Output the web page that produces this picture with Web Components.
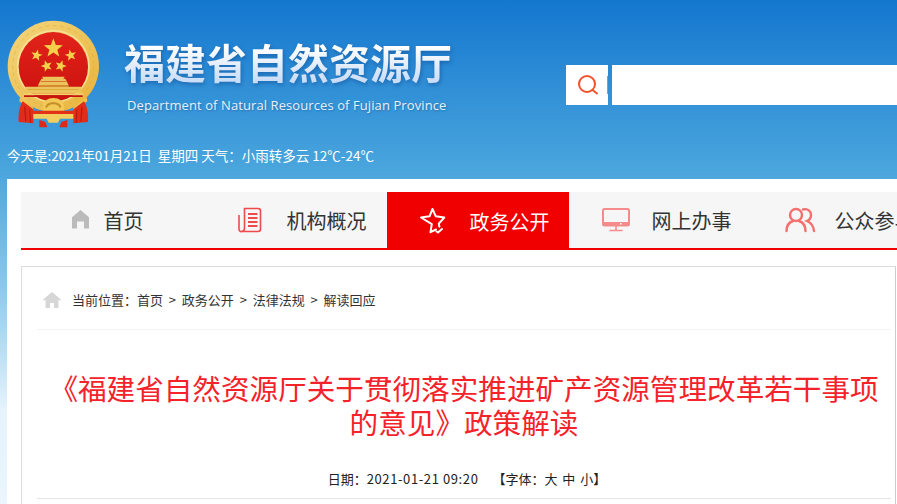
<!DOCTYPE html>
<html lang="zh-CN">
<head>
<meta charset="utf-8">
<title>福建省自然资源厅</title>
<style>
  html, body { margin: 0; height: 504px; overflow: hidden; }
  body {
    background: linear-gradient(180deg, #1477cf 0, #4ba6dd 172px, #8ccaec 290px, #e6f3fc 410px, #eaf5fd 504px);
    font-family: "Noto Sans CJK SC", sans-serif;
  }
</style>
</head>
<body>
<site-header>
  <site-logo slot="logo"></site-logo>
  <span slot="name">福建省自然资源厅</span>
  <span slot="english">Department of Natural Resources of Fujian Province</span>
  <site-search slot="search"></site-search>
  <span slot="weather">今天是:2021年01月21日&nbsp; 星期四 天气&#xFF1A;小雨转多云 12℃-24℃</span>
</site-header>
<page-panel>
  <main-nav>
    <nav-item width="183" text="首页"><svg slot="icon" width="50" height="22" viewBox="0 0 50 22"><path fill="#bbb" d="M18 19.500V8.200L26.500 1 35 8.200v11.300h-5v-7h-7v7z"/></svg></nav-item>
    <nav-item width="183" text="机构概况"><svg slot="icon" width="50" height="26" viewBox="0 0 50 26" fill="none" stroke="#ee4b4b"><path stroke-width="1.600" d="M2 8v14c0 2 1.500 3 3 2.500M8 1.500h13c1.500 0 2.500 1 2.500 2.500v18c0 1.500-1 2.500-2.500 2.500H5c1.500-.5 2.500-1.500 2.500-3V1.500z"/><path stroke-width="2" d="M11 7h9.500M11 11h9.500M11 15h9.500M11 19h9.500"/></svg></nav-item>
    <nav-item width="182" text="政务公开" active><svg slot="icon" width="50" height="26" viewBox="0 0 50 26" fill="none" stroke="#fff" stroke-width="2" stroke-linejoin="round" stroke-linecap="round"><path d="M16 21.500l-5.500 2.700 1.300-8L1 9.500l8.500-1.200L12.500 1l3.300 7.300 8.500 1.200-5.500 6.200.6 3"/><path d="M16.500 23.500l1.500 1 4-3.500"/></svg></nav-item>
    <nav-item width="183" text="网上办事"><svg slot="icon" width="50" height="24" viewBox="0 0 50 24" fill="none"><rect x="1" y="1" width="26" height="16.500" rx="1.500" stroke="#f58b8b" stroke-width="2"/><path fill="#f58b8b" d="M1 14h26v4H1z"/><path stroke="#f58b8b" stroke-width="1.600" d="M14 18v4M7.500 22.500h13"/><path fill="#fff" d="M18 15h1.500v1.500H18z"/></svg></nav-item>
    <nav-item width="183" text="公众参与"><svg slot="icon" width="50" height="26" viewBox="0 0 50 26" fill="none" stroke="#f56e6e" stroke-width="2.400" stroke-linecap="round"><circle cx="11" cy="8" r="6"/><path d="M1.500 24c0-6 3.500-9 6.500-10M20.500 24c0-6-3.500-9-6.500-10"/><path d="M18 2.500c5-1.500 8 2 8 5.500 0 2.500-1.500 5-4 6 3.500 1.500 6.500 4.500 7 10"/></svg></nav-item>
  </main-nav>
  <article-box>
    <bread-crumb></bread-crumb>
    <article-head></article-head>
  </article-box>
</page-panel>
<script>
  class SiteLogo extends HTMLElement {
    constructor() {
      super();
      this.attachShadow({ mode: "open" });
      const star = (x, y, r, rot) => {
        const pts = [];
        for (let i = 0; i < 10; i++) {
          const a = (rot + i * 36 - 90) * Math.PI / 180;
          const d = i % 2 ? r * 0.42 : r;
          pts.push((x + d * Math.cos(a)).toFixed(1) + "," + (y + d * Math.sin(a)).toFixed(1));
        }
        return `<polygon points="${pts.join(" ")}"/>`;
      };
      this.shadowRoot.innerHTML = `
        <style>:host { display: block; width: 110px; height: 110px; } svg { display: block; }</style>
        <svg width="110" height="110" viewBox="0 0 330 330">
          <defs>
            <linearGradient id="g" x1="0" y1="0" x2="1" y2="1"><stop offset="0" stop-color="#f3d67e"/><stop offset="1" stop-color="#e9b238"/></linearGradient>
            <linearGradient id="r" x1="0" y1="0" x2="0" y2="1"><stop offset="0" stop-color="#e1231a"/><stop offset="1" stop-color="#cb110e"/></linearGradient>
          </defs>
          <circle cx="160" cy="139" r="137" fill="url(#g)"/>
          <circle cx="160" cy="139" r="122" fill="none" stroke="#dda72f" stroke-width="2" stroke-dasharray="12 10" opacity=".7"/>
          <circle cx="160" cy="139" r="107" fill="none" stroke="#f6e095" stroke-width="5"/>
          <circle cx="160" cy="140" r="104" fill="url(#r)"/>
          <g fill="#f6d04a">${star(160, 85, 30, 0)}${star(110, 106, 18, 12)}${star(212, 106, 18, -12)}${star(140, 138, 18, -18)}${star(182, 138, 18, 18)}</g>
          <path fill="#ecc25a" d="M126 170h68l-4 6h6l10 20H114l10-20h6zM76 200h168v20H76z"/>
          <path fill="#d8a338" d="M114 196h92v4h-92zM84 208h152v2H84z"/>
          <path fill="#d04a22" d="M122 183h76v2h-76z"/>
          <path fill="#f3d06a" d="M70 220h180v6H70z"/>
          <path fill="#c4160f" d="M72 226h176v5H72z"/>
          <path fill="#f0c24e" d="M60 232l40 30v10l-42-28zM260 232l-40 30v10l42-28z"/>
          <path fill="#e02c18" d="M68 244l32 24v42l-44-4c-2-22 2-46 12-62zM252 244l-32 24v42l44-4c2-22-2-46-12-62z"/>
          <path fill="#b9180f" d="M72 262l4 42h3l-3-44zM88 268l2 40h3l-2-38zM248 262l-4 42h-3l3-44zM232 268l-2 40h-3l2-38z"/>
          <path fill="#f2c956" d="M128 258a32 24 0 0 1 64 0v18h-64z"/>
          <path fill="#c98f2a" d="M136 262a24 16 0 0 1 48 0l-5 2a19 11 0 0 0-38 0z"/>
          <path fill="#e33118" d="M92 272h136v10H92z"/>
          <path fill="#f3cd5d" d="M100 282h120v14h-40l-6 12h-28l-6-12h-40z"/>
          <path fill="#dc2a16" d="M118 300l18 6 6 16h-24zM202 300l-18 6-6 16h24z"/>
        </svg>`;
    }
  }
  customElements.define("site-logo", SiteLogo);

  class SiteSearch extends HTMLElement {
    constructor() {
      super();
      this.attachShadow({ mode: "open" });
      this.shadowRoot.innerHTML = `
        <style>
          :host { display: flex; height: 40px; gap: 4px; }
          .btn { width: 42px; background: #fff; display: flex; align-items: center; position: relative; }
          .btn svg { margin-left: 11px; }
          .btn i { position: absolute; right: 0; top: 11px; width: 1px; height: 18px; background: #9a9a9a; }
          .field { flex: 1; background: #fff; }
        </style>
        <div class="btn">
          <svg width="22" height="22" viewBox="0 0 22 22" fill="none" stroke="#f4512c" stroke-width="2"><circle cx="10" cy="10" r="8"/><path stroke-linecap="round" d="M15.500 16l4.500 3.500"/></svg>
          <i></i>
        </div>
        <div class="field"></div>`;
    }
  }
  customElements.define("site-search", SiteSearch);

  class SiteHeader extends HTMLElement {
    constructor() {
      super();
      this.attachShadow({ mode: "open" });
      this.shadowRoot.innerHTML = `
        <style>
          :host { display: block; height: 179px; color: #fff; padding-top: 20px; box-sizing: border-box; }
          .top { display: flex; height: 110px; }
          .brand { margin-left: 14px; width: 442px; flex: none; padding-top: 18px; }
          .name {
            font: 700 41px/46px "Noto Sans CJK SC", sans-serif;
            white-space: nowrap;
            background: linear-gradient(180deg, #fff 20%, #c9dcf6 95%);
            -webkit-background-clip: text;
            background-clip: text;
            color: transparent;
            filter: drop-shadow(1px 2px 2px rgba(8,60,130,.45));
          }
          .english {
            margin: 12px 0 0 3px;
            font: 13px/18px "Open Sans", sans-serif;
            color: #e6f0fa;
            white-space: nowrap;
            letter-spacing: .09px;
            text-shadow: 1px 1px 2px rgba(10,60,120,.4);
          }
          .search { flex: 1; padding-top: 45px; }
          .weather { margin: 13px 0 0 7px; font-size: 13.500px; line-height: 24px; white-space: nowrap; }
        </style>
        <div class="top">
          <slot name="logo"></slot>
          <div class="brand">
            <div class="name"><slot name="name"></slot></div>
            <div class="english"><slot name="english"></slot></div>
          </div>
          <div class="search"><slot name="search"></slot></div>
        </div>
        <div class="weather"><slot name="weather"></slot></div>`;
    }
  }
  customElements.define("site-header", SiteHeader);

  class PagePanel extends HTMLElement {
    constructor() {
      super();
      this.attachShadow({ mode: "open" });
      this.shadowRoot.innerHTML = `
        <style>
          :host { display: block; margin-left: 7px; height: 325px; background: #fff; padding: 13px 0 0 14px; box-sizing: border-box; overflow: hidden; }
        </style>
        <slot></slot>`;
    }
  }
  customElements.define("page-panel", PagePanel);

  class MainNav extends HTMLElement {
    constructor() {
      super();
      this.attachShadow({ mode: "open" });
      this.shadowRoot.innerHTML = `
        <style>
          :host { display: flex; height: 58px; box-sizing: border-box; background: #f6f6f6; border-bottom: 2px solid #f10000; }
        </style>
        <slot></slot>`;
    }
  }
  customElements.define("main-nav", MainNav);

  class NavItem extends HTMLElement {
    constructor() {
      super();
      this.attachShadow({ mode: "open" });
      const active = this.hasAttribute("active");
      this.shadowRoot.innerHTML = `
        <style>
          :host {
            display: flex; flex: none; align-items: center; box-sizing: border-box;
            width: ${this.getAttribute("width")}px;
            height: ${active ? 58 : 56}px;
            padding-left: 33px;
            font-size: 20px;
            color: ${active ? "#fff" : "#333"};
            background: ${active ? "#f10000" : "transparent"};
          }
          .icon { width: 50px; flex: none; display: flex; align-items: center; }
          .label { white-space: nowrap; line-height: 26px; padding-top: 2px; margin-left: -.5px; }
        </style>
        <span class="icon"><slot name="icon"></slot></span>
        <span class="label">${this.getAttribute("text")}</span>`;
    }
  }
  customElements.define("nav-item", NavItem);

  class ArticleBox extends HTMLElement {
    constructor() {
      super();
      this.attachShadow({ mode: "open" });
      this.shadowRoot.innerHTML = `
        <style>
          :host { display: block; margin-top: 16px; width: 875px; box-sizing: border-box; height: 260px; border: 1px solid #ddd; border-bottom: 0; border-right-color: #ccc; padding: 0 4px 0 15px; }
        </style>
        <slot></slot>`;
    }
  }
  customElements.define("article-box", ArticleBox);

  class BreadCrumb extends HTMLElement {
    constructor() {
      super();
      this.attachShadow({ mode: "open" });
      this.shadowRoot.innerHTML = `
        <style>
          :host { display: flex; align-items: center; height: 63px; padding-top: 3px; box-sizing: border-box; border-bottom: 1px solid #f3f3f3; font-size: 13px; color: #333; white-space: nowrap; }
          svg { margin: 0 11px 0 6px; flex: none; }
          span { word-spacing: 2.900px; }
        </style>
        <svg width="18" height="16" viewBox="0 0 18 16"><path fill="#d6d6d6" d="M9 0l9 7.500-1 1.200L15.500 7.500V16H11v-5H7v5H2.500V7.500L1 8.700 0 7.500z"/></svg>
        <span>当前位置&#xFF1A;首页 &gt; 政务公开 &gt; 法律法规 &gt; 解读回应</span>`;
    }
  }
  customElements.define("bread-crumb", BreadCrumb);

  class ArticleHead extends HTMLElement {
    constructor() {
      super();
      this.attachShadow({ mode: "open" });
      this.shadowRoot.innerHTML = `
        <style>
          :host { display: block; height: 169px; box-sizing: border-box; border-bottom: 1px solid #e5e5e5; text-align: center; }
          h1 { margin: 0; padding: 41px 0 0; font-size: 28.600px; line-height: 34px; font-weight: 400; color: #f5222a; }
          .meta { margin-top: 30px; padding-left: 6px; font-size: 13px; line-height: 20px; color: #222; word-spacing: 2px; }
          .date { letter-spacing: .6px; word-spacing: 0; }
          .font { margin-left: 14px; }
        </style>
        <h1>《福建省自然资源厅关于贯彻落实推进矿产资源管理改革若干事项的意见》政策解读</h1>
        <div class="meta">日期&#xFF1A;<span class="date">2021-01-21 09:20</span><span class="font">【字体&#xFF1A;大 中 小】</span></div>`;
    }
  }
  customElements.define("article-head", ArticleHead);
</script>
</body>
</html>
